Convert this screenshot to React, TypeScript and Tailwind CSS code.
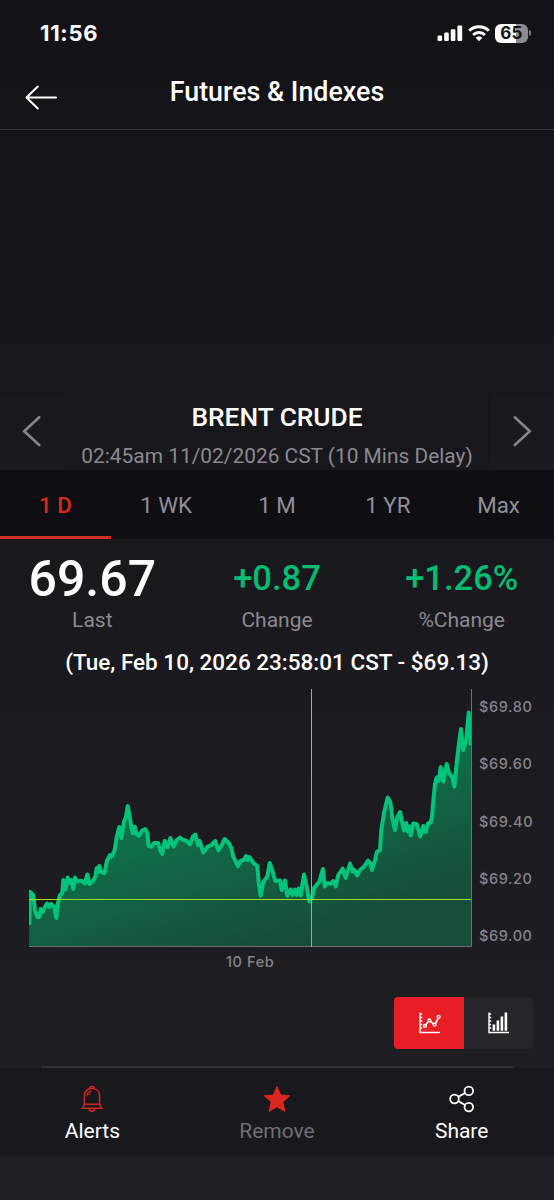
import { useState } from 'react';
import clsx from 'clsx';

const ranges = ['1 D', '1 WK', '1 M', '1 YR', 'Max'];
const priceLabels = ['$69.80', '$69.60', '$69.40', '$69.20', '$69.00'];

// x,y pairs of the intraday line, in a 444 x 258 plot
const line =
  '1.3,236 2,202.7 5.3,206 7,221 9.3,228 11.3,228 12.7,220 14.7,223 17,217.7 19.3,214.5 21.3,218 23,215 26.3,218 28.3,229 30,214 32,206 34.3,204 35.3,191 37.3,200.5 39.7,188.5 42,194 43.3,191 45.3,200 47,188.5 48.7,192.5 53.7,191.7 57,194.5 59.3,185.5 61.7,195 64.7,192.7 67.3,187.7 68.7,179 70,183 71.3,177 73.3,183 76.7,184 78.7,172.7 82,166 83.7,167.7 86.7,161 88.7,147.7 91.3,138 93.3,149 96,132.7 98,128 99.7,117 101.7,127.7 103.3,137.7 104.7,144 106.7,137.7 108.7,145.5 111,146.7 114,141.7 117.3,140 119.3,144 120.7,157 123.7,157.5 126,154 130.3,154 132,161 134.3,165 136.7,152 139.7,158 142.3,149 145.5,157.5 148.7,151 152,148.5 155.3,151 158.7,152 162,155.5 164.7,148 167.3,145.5 170,156 171.7,152 175.3,163.5 179.3,158 183.3,156 187.3,152 190.3,161.5 193.7,156 196.7,150 200.7,154 203.3,158.7 205.3,167.7 208,172.7 210,177.5 212.7,171.7 216,171 218,167 220,171 221.3,168 225.3,173.7 229.3,177 230.7,194 232.7,206.7 235.3,192.7 239.3,187.7 241.7,174 244.7,182.7 247.3,192 252,191.5 253.7,201 257,191.5 259.3,206.7 262.7,200.5 264.7,206 267,200.5 268.7,206 270.7,199.5 272.7,206.5 276,185.5 278.7,197.7 281.3,212.5 284,209 286,199 291.3,192.7 294.9,180 296.7,197.5 299.3,194 302.7,194.7 305.3,192 307.7,197.5 310.3,186 314.7,179.5 317.7,189 322,174.5 324.7,182.7 326.7,181 329,186.5 332,181 336,177.7 340,171.5 342,173.7 344,181 347,171 349,162.7 352,161 353.3,141 356,124 359.7,108.5 362.3,112.7 364.3,129 367,141 369.3,128 372,123 374.3,134 376,141.5 378.3,134 380,142.5 381.3,137.5 382.7,146.5 385.3,134.5 388.7,135 392.3,147.5 395.3,137 397.7,143 400,134.5 402.7,133.5 404,127.7 405.7,107.7 407,95 408.7,88.5 410.7,92 412.7,78 415.3,92.5 418.7,75 421,84 424.3,88 426.3,97.5 428.7,74 431,54 433,40 435,61 438,52.7 440.7,23.5 443,56';

function StatusBar() {
  return (
    <div className="flex h-[66px] items-center justify-between pr-[23px] pl-[40px]">
      <span className="mt-[1px] font-['Inter'] text-[22px] font-bold tracking-[0.7px]">11:56</span>
      <div className="flex items-center gap-[5px]">
        <svg width="26" height="18" viewBox="0 0 26 18" fill="white">
          <rect x="0.5" y="11.5" width="4.6" height="5.5" rx="1.2" />
          <rect x="7.2" y="8.5" width="4.6" height="8.5" rx="1.2" />
          <rect x="13.8" y="5.3" width="4.6" height="11.7" rx="1.2" />
          <rect x="20.4" y="1.5" width="4.8" height="15.5" rx="1.2" />
        </svg>
        <svg width="22" height="18" viewBox="0 0 22 18" fill="none" stroke="white" strokeWidth="3">
          <path d="M1.2 6.8a14 14 0 0 1 19.6 0" />
          <path d="M5.1 11a8.4 8.4 0 0 1 11.8 0" />
          <path d="M11 17.3 7.6 13.8a5 5 0 0 1 6.8 0z" fill="white" stroke="none" />
        </svg>
        <div className="flex items-center gap-[1px]">
          <div className="flex h-[19px] w-[33px] items-center justify-center rounded-[6px] bg-linear-to-r from-white from-65% to-[#8c8c8f] to-65% font-['Inter'] text-[17px] leading-none font-bold tracking-[0.3px] text-[#141318]">
            65
          </div>
          <div className="h-[6px] w-[2px] rounded-r-full bg-[#79797c]" />
        </div>
      </div>
    </div>
  );
}

function Chevron({ flip }: { flip?: boolean }) {
  return (
    <svg width="20" height="34" viewBox="0 0 20 34" fill="none" stroke="#86858b" strokeWidth="2.6" strokeLinecap="round" className={clsx(flip && '-scale-x-100')}>
      <path d="M17.2 3.2 2.2 17.2 17.2 31" />
    </svg>
  );
}

function Stat({ value, label, big }: { value: string; label: string; big?: boolean }) {
  return (
    <div className="flex flex-col items-center">
      <div
        className={clsx(
          'flex h-[60px] items-center font-medium',
          big ? 'text-[50px]' : 'text-[34.5px] text-[#04bc74]'
        )}
      >
        {value}
      </div>
      <div className="-mt-[2px] text-[21px] leading-[26px] text-[#8b8a91]">{label}</div>
    </div>
  );
}

function Chart() {
  return (
    <div className="mt-[13px] flex h-[258px] pl-[28px]">
      <svg width="444" height="258" viewBox="0 0 444 258" className="shrink-0" fill="none">
        <defs>
          <linearGradient id="area" gradientUnits="userSpaceOnUse" x1="180" y1="90" x2="230" y2="258">
            <stop offset="0" stopColor="#0d774c" />
            <stop offset="1" stopColor="#164e3a" />
          </linearGradient>
          <clipPath id="plot">
            <rect x="1" width="442.5" height="258" />
          </clipPath>
        </defs>
        <polygon points={`1,258 ${line} 443,258`} fill="url(#area)" />
        <polyline points={line} stroke="#03c47a" strokeWidth="4" strokeLinejoin="round" clipPath="url(#plot)" />
        <path d="M443.5 0V257.5H1" stroke="#6e7073" />
        <path d="M283.5 0V258" stroke="#aabf12" />
        <path d="M1 210.5H443" stroke="#9fdc1e" />
      </svg>
      <div className="mt-[8px] ml-[7px] flex flex-col gap-[37.3px] font-['Inter'] text-[14.5px] leading-[20px] font-medium tracking-[0.6px] text-[#85848b]">
        {priceLabels.map((p) => (
          <span key={p}>{p}</span>
        ))}
      </div>
    </div>
  );
}

const axes = 'M1 0.5V20.5H21M1 2h2.2M1 5.5h2.2M1 9h2.2M1 12.5h2.2M1 16h2.2';

function ChartToggle() {
  return (
    <div className="mt-[24px] mr-[21px] ml-auto flex h-[52px] w-[139px] overflow-hidden rounded-[4px]">
      <button className="flex flex-1 items-center justify-center bg-[#e91d25] pl-[2px]">
        <svg width="22" height="22" viewBox="0 0 22 22" fill="none" stroke="white" strokeWidth="1.4">
          <path d={axes} />
          <path d="m6.8 12.8 2.6-3.3M11.5 9.3l3 2.6M16.3 11.6l3.1-5.7" strokeWidth="1.7" />
          <circle cx="5.9" cy="13.9" r="1.4" />
          <circle cx="10.3" cy="8.4" r="1.4" />
          <circle cx="15.6" cy="12.7" r="1.4" />
          <circle cx="19.6" cy="4.8" r="1.4" />
        </svg>
      </button>
      <button className="flex flex-1 items-center justify-center bg-[#26252a] pl-[2px]">
        <svg width="22" height="22" viewBox="0 0 22 22" fill="white">
          <path d={axes} fill="none" stroke="white" strokeWidth="1.4" />
          <rect x="4.6" y="12.5" width="2.6" height="6.2" />
          <rect x="8.6" y="8.5" width="2.6" height="10.2" />
          <rect x="12.6" y="4.5" width="2.6" height="14.2" />
          <rect x="16.6" y="0.5" width="2.6" height="18.2" />
        </svg>
      </button>
    </div>
  );
}

export default function App() {
  const [range, setRange] = useState('1 D');

  return (
    <div className="h-[1200px] w-[554px] overflow-hidden bg-linear-to-b from-[#131217] to-[#1f1e23] to-90% font-['Roboto',sans-serif] text-white">
      <StatusBar />

      <header className="grid h-[64px] grid-cols-[84px_1fr_84px] border-b border-[#353439]">
        <button className="flex pt-[19px] pl-[25px]">
          <svg width="33" height="25" viewBox="0 0 33 25" fill="none" stroke="white" strokeWidth="2" strokeLinecap="round" strokeLinejoin="round">
            <path d="M12.8 1.5 1.5 12.5l11.3 11M1.5 12.5H31" />
          </svg>
        </button>
        <h1 className="pt-[10px] text-center text-[26.8px] leading-[32px] font-medium">Futures &amp; Indexes</h1>
      </header>

      <section className="mt-[264px] flex h-[76px] justify-between">
        <button className="flex w-[64px] bg-white/[0.008] pt-[20px] pl-[22px]">
          <Chevron />
        </button>
        <div className="text-center">
          <h2 className="mt-[8px] text-[26.3px] leading-[30px] font-medium">BRENT CRUDE</h2>
          <p className="mt-[11px] text-[20.9px] leading-[26px] whitespace-nowrap text-[#8b8a91]">
            02:45am 11/02/2026 CST (10 Mins Delay)
          </p>
        </div>
        <button className="flex w-[64px] justify-end bg-white/[0.008] pt-[20px] pr-[22px]">
          <Chevron flip />
        </button>
      </section>

      <nav className="grid h-[69px] grid-cols-5 bg-[#0f0e13]">
        {ranges.map((r) => (
          <button
            key={r}
            onClick={() => setRange(r)}
            className={clsx(
              'border-b-[3px] pt-[5px] text-[22.3px]',
              r === range ? 'border-[#d32d27] font-medium text-[#d9291f]' : 'border-transparent text-[#919097]'
            )}
          >
            {r}
          </button>
        ))}
      </nav>

      <section className="mt-[10px] grid h-[95px] grid-cols-3">
        <Stat value="69.67" label="Last" big />
        <Stat value="+0.87" label="Change" />
        <Stat value="+1.26%" label="%Change" />
      </section>

      <p className="mt-[4px] text-center text-[22.5px] leading-[28px] font-medium">
        (Tue, Feb 10, 2026 23:58:01 CST - $69.13)
      </p>

      <Chart />
      <div className="mt-[5px] h-[21px] pl-[226px] font-['Inter'] text-[14.5px] leading-[20px] font-medium tracking-[0.6px] text-[#85848b]">
        10 Feb
      </div>
      <ChartToggle />

      <div className="mx-[41px] mt-[17px] h-[2px] bg-[#323136]" />
      <footer className="grid h-[87px] grid-cols-3 bg-[#19181d] pt-[17px] text-[21px] leading-[26px]">
        <button className="flex flex-col items-center gap-[5px]">
          <svg width="24" height="28" viewBox="0 0 24 28" fill="none" stroke="#ca2723" strokeWidth="1.5" strokeLinejoin="round">
            <path d="M4.4 19.2V10.8C4.4 6.5 7.3 3.6 12 3.6s7.6 2.9 7.6 7.2v8.4" />
            <path d="M9.7 3.8c0-1.6.9-2.4 2.3-2.4s2.3.8 2.3 2.4M4.4 19.2h15.2M4.4 19.2 3.2 22.2M19.6 19.2l1.2 3M1.2 23.2h21.6" />
            <path d="M9 23.4c.2 1.9 1.3 2.9 3 2.9s2.8-1 3-2.9" />
            <path d="M6.9 11.5C7 8.4 8.6 6.5 11.4 5.9M8.9 10.2c.3-1 .9-1.6 1.8-2" strokeWidth="1.1" />
          </svg>
          Alerts
        </button>
        <button className="flex flex-col items-center gap-[5px] text-[#6f6e74]">
          <svg width="28" height="28" viewBox="0 0 28 28" fill="#dc251c" stroke="#dc251c" strokeLinejoin="round">
            <path d="M14 1.5 17.7 10l9 .8-6.9 6.1 2.1 9.5-7.9-4.6-7.9 4.6 2.1-9.5L1.3 10.8l9-.8z" />
          </svg>
          Remove
        </button>
        <button className="flex flex-col items-center gap-[5px]">
          <svg width="26" height="28" viewBox="0 0 26 28" fill="none" stroke="white" strokeWidth="1.8">
            <circle cx="5.5" cy="14" r="4.3" />
            <circle cx="19.8" cy="5.9" r="4.3" />
            <circle cx="19.8" cy="22.1" r="4.3" />
            <path d="m9.2 11.9 6.9-3.9M9.2 16.1l6.9 3.9" />
          </svg>
          Share
        </button>
      </footer>
    </div>
  );
}
